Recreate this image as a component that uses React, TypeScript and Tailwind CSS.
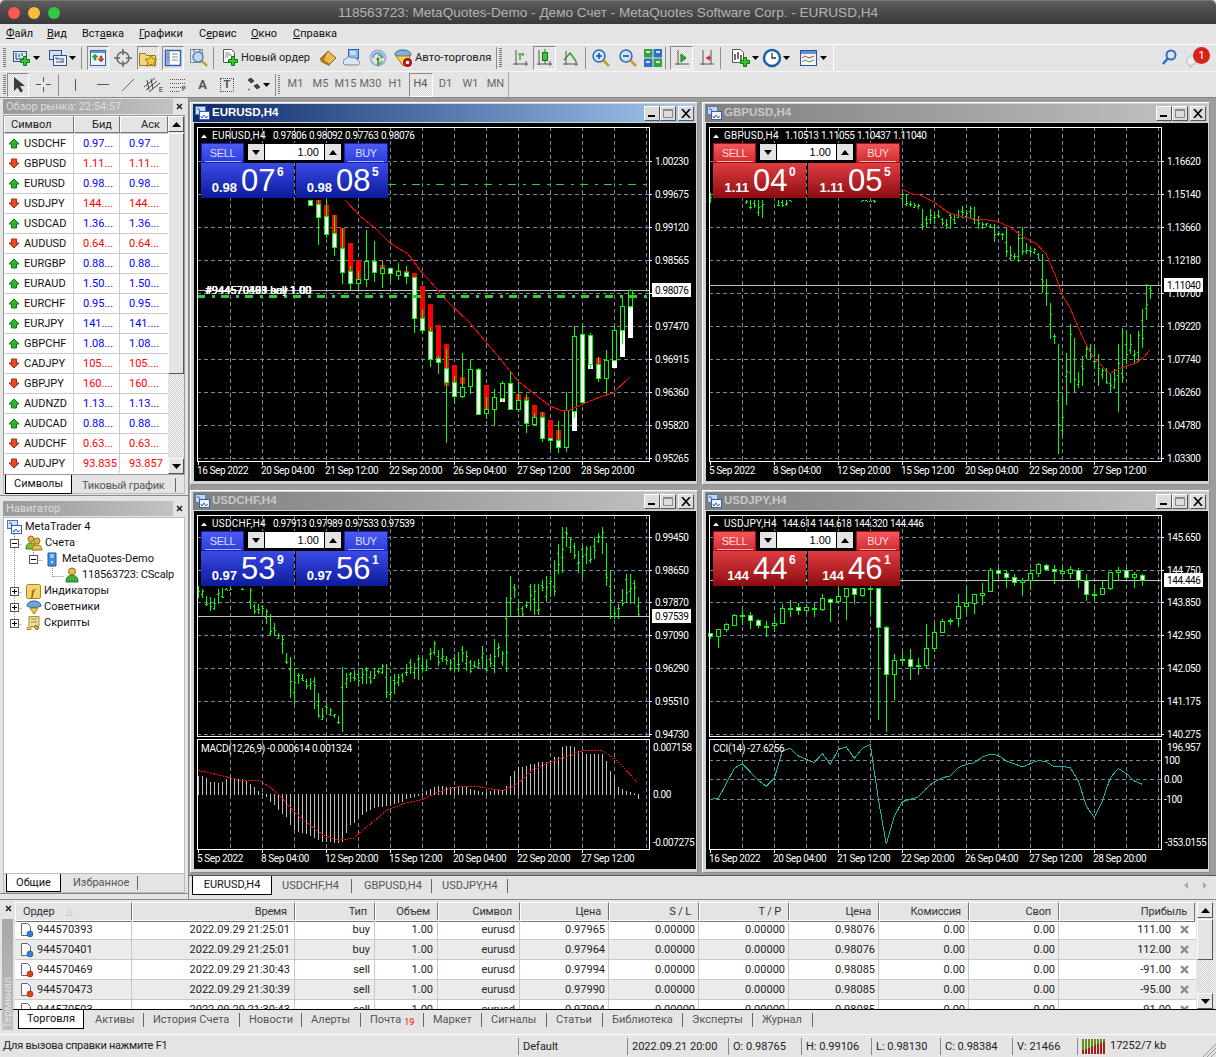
import type { ReactNode } from "react";

type Pt = [number, number];

// ---- chart data, read off the screenshot (page pixels for the candles, 3x crop pixels for the rest)
// [x, wickTop, wickBottom, bodyTop, bodyBottom, bear, redTop, redBottom, whiteBelow]
const eurCandles: number[][] = [
    [310, 199, 204, 199, 204, 1],
    [318, 199, 244, 203, 216, 1, 199, 203],
    [326, 199, 237, 215, 233, 1, 204, 215],
    [334, 214, 255, 232, 246, 1, 214, 232],
    [342, 227, 283, 247, 271, 1, 227, 247],
    [350, 265, 289, 270, 282, 1, 242, 270],
    [358, 270, 289, 278, 282, 0, 259, 278],
    [366, 229, 286, 260, 278, 0],
    [374, 240, 281, 260, 271, 1],
    [382, 260, 287, 267, 272, 0, 264, 267],
    [390, 267, 280, 267, 272, 1],
    [398, 262, 279, 270, 274, 0, 269, 271],
    [406, 265, 283, 271, 275, 1, 270, 271],
    [414, 276, 332, 276, 317, 1, 272, 276],
    [422, 308, 333, 317, 329, 1, 285, 317],
    [430, 326, 366, 330, 358, 1, 303, 330],
    [438, 355, 373, 357, 361, 1, 324, 362],
    [446, 348, 442, 367, 381, 1, 343, 385],
    [454, 375, 403, 381, 395, 1, 364, 381],
    [462, 352, 397, 386, 395, 0, 376, 383],
    [470, 359, 393, 368, 385, 0],
    [478, 367, 414, 368, 413, 1],
    [486, 396, 418, 408, 412, 0, 384, 408],
    [494, 388, 424, 396, 408, 0],
    [502, 380, 401, 382, 397, 0, 0, 0, 401],
    [510, 370, 409, 382, 408, 1],
    [518, 380, 411, 399, 408, 0, 393, 399],
    [526, 393, 432, 399, 422, 1, 396, 399],
    [534, 412, 425, 416, 423, 0, 404, 416],
    [542, 411, 441, 416, 437, 1, 411, 416],
    [550, 437, 448, 437, 439, 1, 419, 437],
    [558, 420, 452, 439, 446, 1, 429, 439],
    [566, 391, 451, 409, 446, 0],
    [574, 325, 417, 335, 410, 0, 0, 0, 430],
    [582, 323, 341, 333, 401, 2],
    [590, 332, 368, 334, 363, 1, 0, 0, 368],
    [598, 356, 381, 363, 377, 1, 357, 363],
    [606, 349, 393, 359, 377, 0],
    [614, 324, 359, 329, 359, 0, 0, 0, 367],
    [622, 296, 343, 305, 329, 0, 0, 0, 356],
    [630, 288, 307, 289, 305, 0, 0, 0, 337],
];
const eurMa: Pt[] = [[345, 199], [360, 215], [375, 227], [390, 242], [408, 253], [423, 273], [430, 280], [447, 300], [470, 322], [485, 340], [502, 360], [518, 380], [537, 395], [550, 405], [560, 409], [570, 409], [583, 403], [600, 396], [613, 392], [630, 376]];

// [cropX, high, low] in crop pixels
const gbpBars: number[][] = [[31, 275, 305], [139, 298, 308], [151, 298, 323], [163, 298, 320], [175, 296, 345], [187, 296, 352], [235, 298, 316], [247, 298, 317], [259, 298, 315], [271, 298, 300], [487, 297, 300], [499, 297, 301], [511, 297, 300], [523, 297, 305], [607, 275, 310], [619, 278, 315], [631, 300, 318], [643, 305, 322], [655, 308, 325], [667, 323, 388], [679, 345, 378], [691, 325, 370], [703, 340, 370], [715, 328, 350], [727, 350, 375], [739, 355, 385], [751, 335, 385], [763, 340, 370], [775, 328, 350], [787, 315, 350], [799, 328, 350], [811, 316, 352], [823, 318, 368], [835, 345, 385], [847, 362, 385], [859, 365, 378], [871, 368, 380], [883, 368, 422], [895, 390, 405], [907, 395, 418], [919, 380, 468], [931, 435, 478], [943, 455, 478], [955, 390, 482], [967, 378, 462], [979, 425, 460], [991, 440, 462], [1003, 440, 460], [1015, 455, 475], [1027, 458, 577], [1039, 535, 615], [1051, 605, 715], [1063, 700, 730], [1075, 728, 1058], [1087, 885, 1002], [1099, 755, 912], [1111, 670, 845], [1123, 712, 872], [1135, 812, 862], [1147, 765, 855], [1159, 735, 775], [1171, 730, 775], [1183, 738, 805], [1195, 760, 855], [1207, 800, 835], [1219, 800, 850], [1231, 815, 872], [1243, 805, 865], [1255, 730, 932], [1267, 680, 845], [1279, 688, 790], [1291, 698, 760], [1303, 748, 785], [1315, 690, 780], [1327, 625, 742], [1339, 550, 658], [1351, 552, 595]];
const gbpMa: Pt[] = [[607, 265], [640, 280], [660, 282], [700, 302], [745, 335], [790, 348], [830, 355], [880, 358], [900, 365], [930, 378], [970, 408], [1010, 428], [1040, 462], [1065, 520], [1085, 580], [1110, 620], [1135, 680], [1165, 745], [1190, 780], [1230, 818], [1265, 800], [1310, 785], [1330, 770], [1350, 747]];

const chfBars: number[][] = [[25, 285, 320], [37, 295, 322], [49, 315, 345], [61, 318, 360], [73, 320, 358], [85, 295, 338], [97, 292, 322], [109, 292, 298], [121, 292, 298], [157, 292, 298], [181, 290, 355], [193, 340, 368], [205, 338, 368], [217, 342, 368], [229, 355, 400], [241, 370, 435], [253, 395, 435], [265, 425, 445], [277, 435, 490], [289, 485, 520], [301, 498, 620], [313, 530, 638], [325, 545, 580], [337, 550, 570], [349, 565, 595], [361, 560, 598], [373, 558, 655], [385, 605, 682], [397, 650, 688], [409, 632, 665], [421, 650, 675], [433, 668, 682], [445, 675, 700], [457, 528, 722], [469, 545, 592], [481, 542, 572], [493, 538, 570], [505, 540, 585], [517, 530, 580], [529, 528, 578], [541, 540, 578], [553, 530, 565], [565, 532, 548], [577, 518, 550], [589, 520, 620], [601, 555, 628], [613, 548, 608], [625, 548, 585], [637, 545, 572], [649, 520, 555], [661, 505, 548], [673, 515, 565], [685, 492, 568], [697, 502, 542], [709, 505, 540], [721, 472, 508], [733, 450, 492], [745, 478, 525], [757, 470, 512], [769, 495, 522], [781, 505, 540], [793, 488, 540], [805, 482, 542], [817, 465, 512], [829, 480, 540], [841, 508, 545], [853, 510, 532], [865, 505, 530], [877, 465, 535], [889, 505, 540], [901, 488, 528], [913, 445, 545], [925, 455, 498], [937, 480, 525], [949, 318, 542], [961, 255, 375], [973, 280, 320], [985, 325, 375], [997, 345, 375], [1009, 330, 352], [1021, 278, 360], [1033, 280, 372], [1045, 280, 372], [1057, 268, 300], [1069, 255, 332], [1081, 255, 318], [1093, 208, 315], [1105, 160, 250], [1117, 108, 245], [1129, 108, 168], [1141, 140, 185], [1153, 155, 205], [1165, 180, 245], [1177, 165, 260], [1189, 165, 218], [1201, 165, 215], [1213, 138, 205], [1225, 125, 155], [1237, 108, 190], [1249, 155, 285], [1261, 240, 385], [1273, 355, 385], [1285, 340, 385], [1297, 295, 345], [1309, 248, 335], [1321, 250, 340], [1333, 268, 340], [1345, 318, 375]];

const macdHist = [55, 55, 48, 36, 36, 32, 35, 45, 48, 48, 46, 45, 42, 30, 20, 10, 3, -5, -22, -30, -45, -58, -65, -90, -105, -110, -115, -118, -122, -128, -135, -140, -142, -142, -145, -145, -140, -115, -90, -85, -70, -60, -50, -45, -40, -35, -35, -32, -30, -28, -25, -20, -12, -8, -5, -2, 3, 8, 15, 20, 25, 25, 20, 20, 22, 22, 22, 20, 15, 12, 8, 5, 5, 8, 12, 12, 12, 25, 55, 70, 80, 82, 85, 90, 90, 95, 95, 95, 100, 110, 110, 140, 143, 145, 140, 130, 125, 120, 120, 120, 120, 120, 100, 68, 50, 22, 15, 8, 5, 3, -12];
const macdSignal: Pt[] = [[25, 838], [100, 855], [150, 868], [205, 868], [240, 888], [270, 915], [310, 960], [350, 995], [400, 1032], [445, 1048], [490, 1042], [540, 1000], [590, 958], [640, 938], [700, 925], [740, 905], [780, 892], [820, 885], [870, 888], [910, 895], [940, 898], [980, 880], [1030, 835], [1085, 812], [1130, 798], [1180, 778], [1235, 778], [1280, 808], [1340, 872]];

// [cropX, wickTop, bodyTop, bodyBottom, wickBottom, bear]
const jpyCandles: number[][] = [[31, 425, 425, 435, 445, 1], [55, 415, 415, 437, 470, 0], [79, 395, 400, 415, 422, 0], [103, 370, 372, 402, 402, 0], [127, 357, 372, 374, 402, 1], [151, 362, 373, 388, 413, 1], [175, 383, 388, 403, 412, 1], [199, 390, 404, 406, 437, 1], [223, 378, 397, 403, 422, 0], [247, 338, 352, 398, 400, 0], [271, 328, 350, 352, 378, 1], [295, 335, 349, 358, 372, 1], [319, 340, 348, 358, 370, 0], [343, 335, 350, 354, 378, 0], [367, 310, 322, 356, 360, 0], [391, 320, 323, 332, 392, 1], [415, 290, 316, 332, 340, 0], [439, 290, 292, 316, 386, 0], [463, 290, 292, 310, 340, 1], [487, 290, 292, 312, 318, 0], [511, 290, 290, 292, 372, 0], [535, 290, 290, 406, 686, 1], [559, 405, 407, 547, 722, 1], [583, 490, 506, 547, 627, 0], [607, 483, 503, 506, 518, 1], [631, 475, 505, 526, 567, 1], [655, 502, 523, 526, 552, 1], [679, 400, 472, 524, 530, 0], [703, 397, 424, 472, 482, 0], [727, 385, 389, 422, 425, 0], [751, 380, 388, 392, 402, 1], [775, 310, 344, 379, 408, 0], [799, 288, 337, 345, 372, 0], [823, 310, 310, 337, 368, 0], [847, 276, 305, 310, 342, 0], [871, 232, 238, 302, 304, 0], [895, 232, 238, 246, 265, 1], [919, 238, 245, 256, 290, 1], [943, 248, 257, 273, 285, 1], [967, 262, 268, 274, 315, 0], [991, 235, 247, 268, 296, 0], [1015, 217, 220, 247, 258, 0], [1039, 220, 222, 233, 238, 1], [1063, 222, 233, 240, 278, 1], [1087, 225, 241, 246, 258, 0], [1111, 225, 235, 247, 264, 0], [1135, 232, 236, 265, 292, 1], [1159, 250, 266, 307, 330, 1], [1183, 280, 308, 311, 330, 1], [1207, 268, 292, 310, 312, 0], [1231, 242, 244, 293, 296, 0], [1255, 228, 238, 243, 270, 0], [1279, 232, 238, 259, 264, 1], [1303, 242, 250, 260, 290, 0], [1327, 250, 252, 267, 285, 1]];
const cciLine: Pt[] = [[31, 925], [55, 922], [103, 832], [127, 818], [175, 868], [199, 886], [223, 862], [247, 780], [271, 772], [295, 795], [343, 815], [367, 788], [391, 820], [415, 775], [439, 768], [463, 802], [487, 772], [511, 760], [535, 925], [559, 1060], [583, 975], [607, 932], [655, 918], [679, 892], [703, 872], [727, 860], [751, 855], [775, 830], [799, 820], [823, 815], [847, 798], [871, 790], [895, 793], [919, 810], [943, 818], [967, 828], [991, 818], [1015, 808], [1039, 812], [1063, 828], [1087, 826], [1111, 830], [1135, 870], [1159, 945], [1183, 980], [1207, 930], [1231, 860], [1255, 832], [1279, 848], [1303, 870], [1327, 880]];

const eurDates = ["16 Sep 2022", "20 Sep 04:00", "21 Sep 12:00", "22 Sep 20:00", "26 Sep 04:00", "27 Sep 12:00", "28 Sep 20:00"];
const sepDates = ["5 Sep 2022", "8 Sep 04:00", "12 Sep 20:00", "15 Sep 12:00", "20 Sep 04:00", "22 Sep 20:00", "27 Sep 12:00"];
const gbpDates = sepDates;

const symbols: [string, string, string, boolean][] = [
    ["USDCHF", "0.97...", "0.97...", true],
    ["GBPUSD", "1.11...", "1.11...", false],
    ["EURUSD", "0.98...", "0.98...", true],
    ["USDJPY", "144....", "144....", false],
    ["USDCAD", "1.36...", "1.36...", true],
    ["AUDUSD", "0.64...", "0.64...", false],
    ["EURGBP", "0.88...", "0.88...", true],
    ["EURAUD", "1.50...", "1.50...", true],
    ["EURCHF", "0.95...", "0.95...", true],
    ["EURJPY", "141....", "141....", true],
    ["GBPCHF", "1.08...", "1.08...", true],
    ["CADJPY", "105....", "105....", false],
    ["GBPJPY", "160....", "160....", false],
    ["AUDNZD", "1.13...", "1.13...", true],
    ["AUDCAD", "0.88...", "0.88...", true],
    ["AUDCHF", "0.63...", "0.63...", false],
    ["AUDJPY", "93.835", "93.857", false],
];

const orders = [
    ["944570393", "2022.09.29 21:25:01", "buy", "0.97965", "0.98076", "111.00"],
    ["944570401", "2022.09.29 21:25:01", "buy", "0.97964", "0.98076", "112.00"],
    ["944570469", "2022.09.29 21:30:43", "sell", "0.97994", "0.98085", "-91.00"],
    ["944570473", "2022.09.29 21:30:39", "sell", "0.97990", "0.98085", "-95.00"],
    ["944570503", "2022.09.29 21:30:43", "sell", "0.97994", "0.98085", "-91.00"],
];

// ---- chart pieces
const line = (pts: Pt[]) => pts.map((p) => p.join(",")).join(" ");
const GRID = "#778899";
const GREEN = "#00ff00";

function Bars({ data, cx, cy }: { data: number[][]; cx: number; cy: number }) {
    return (
        <g shapeRendering="crispEdges">
            {data.map(([zx, hi, lo], i) => {
                const x = Math.round(cx + zx / 3);
                const top = cy + hi / 3;
                const bottom = cy + lo / 3;
                const o = top + (((i * 37) % 80) / 100 + 0.1) * (bottom - top);
                const c = top + (((i * 61 + 30) % 80) / 100 + 0.1) * (bottom - top);
                return (
                    <g key={i} fill={GREEN}>
                        <rect x={x} y={top} width={1} height={bottom - top} />
                        <rect x={x - 1} y={o} width={1} height={1} />
                        <rect x={x + 1} y={c} width={1} height={1} />
                    </g>
                );
            })}
        </g>
    );
}

function Candle({ x, wt, wb, bt, bb, bear }: { x: number; wt: number; wb: number; bt: number; bb: number; bear: boolean }) {
    return (
        <g>
            <rect x={x} y={wt} width={1} height={wb - wt} fill={GREEN} />
            <rect x={x - 2 + 0.5} y={Math.round(bt) + 0.5} width={4} height={Math.max(1, Math.round(bb - bt))} fill={bear ? "#fff" : "#000"} stroke={GREEN} />
        </g>
    );
}

function EurCandles() {
    return (
        <g shapeRendering="crispEdges">
            {eurCandles.map(([x, wt, wb, bt, bb, kind, rt, rb, wh], i) => (
                <g key={i}>
                    {rt ? <rect x={x - 2} y={rt} width={5} height={rb - rt} fill="#ff0000" /> : null}
                    {wh ? <rect x={x - 2} y={bb} width={5} height={wh - bb} fill="#fff" /> : null}
                    <Candle x={x} wt={wt} wb={wb} bt={bt} bb={bb} bear={kind > 0} />
                </g>
            ))}
        </g>
    );
}

function JpyCandles() {
    return (
        <g shapeRendering="crispEdges">
            {jpyCandles.map(([zx, wt, bt, bb, wb, bear], i) => (
                <Candle key={i} x={Math.round(700 + zx / 3)} wt={490 + wt / 3} wb={490 + wb / 3} bt={490 + bt / 3} bb={490 + bb / 3} bear={bear > 0} />
            ))}
        </g>
    );
}

function MacdPane() {
    return (
        <g>
            <g shapeRendering="crispEdges" fill="#c0c0c0">
                {macdHist.map((v, i) => {
                    const x = Math.round(190 + (25 + i * 12) / 3);
                    const h = Math.abs(v) / 3;
                    return <rect key={i} x={x} y={v > 0 ? 793 - h : 793} width={1} height={h + 1} />;
                })}
            </g>
            <polyline points={line(macdSignal.map(([x, y]): Pt => [190 + x / 3, 490 + y / 3]))} fill="none" stroke="#ff0000" strokeWidth={1} strokeDasharray="2 1" shapeRendering="crispEdges" />
            <ChartText x={201} y={751} spacing={-0.25}>MACD(12,26,9) -0.000614 0.001324</ChartText>
        </g>
    );
}

function ChartText({ x, y, fill = "#fff", spacing = -0.4, children }: { x: number; y: number; fill?: string; spacing?: number; children: ReactNode }) {
    return (
        <text x={x} y={y} fill={fill} fontSize={10} letterSpacing={spacing}>
            {children}
        </text>
    );
}

type ChartProps = {
    ox: number;
    oy: number;
    frameTop: number;
    frameBottom: number;
    sub?: { grid: number[]; labels: [string, number, number?][] };
    gridY: number[];
    labels: [string, number][];
    price: [string, number, number];
    dates: string[];
    legend: [string, string, number];
    children: ReactNode;
};

function Chart({ ox, oy, frameTop, frameBottom, sub, gridY, labels, price, dates, legend, children }: ChartProps) {
    const fx = ox + 3;
    const right = fx + 452;
    const bottom = sub ? 848 : frameBottom;
    const vx = Array.from({ length: 14 }, (_, i) => fx + 33 + i * 32);
    return (
        <svg width={502} height={358} viewBox={`${ox} ${oy} 502 358`} className="block bg-black">
            {gridY.map((y) => (
                <line key={y} x1={fx} x2={right} y1={y + 0.5} y2={y + 0.5} stroke={GRID} strokeDasharray="4 3" shapeRendering="crispEdges" />
            ))}
            {sub?.grid.map((y) => (
                <line key={y} x1={fx} x2={right} y1={y + 0.5} y2={y + 0.5} stroke={GRID} strokeDasharray="4 3" shapeRendering="crispEdges" />
            ))}
            {vx.map((x) => (
                <g key={x}>
                    <line x1={x + 0.5} x2={x + 0.5} y1={frameTop} y2={frameBottom} stroke={GRID} strokeDasharray="4 3" shapeRendering="crispEdges" />
                    {sub ? <line x1={x + 0.5} x2={x + 0.5} y1={738} y2={848} stroke={GRID} strokeDasharray="4 3" shapeRendering="crispEdges" /> : null}
                </g>
            ))}
            <line x1={fx} x2={right} y1={price[2] + 0.5} y2={price[2] + 0.5} stroke="#c0c0c0" shapeRendering="crispEdges" />
            {children}
            <rect x={fx + 0.5} y={frameTop + 0.5} width={452} height={frameBottom - frameTop} fill="none" stroke="#fff" shapeRendering="crispEdges" />
            {sub ? <rect x={fx + 0.5} y={738.5} width={452} height={110} fill="none" stroke="#fff" shapeRendering="crispEdges" /> : null}
            {gridY.map((y) => (
                <line key={y} x1={right} x2={right + 3} y1={y + 0.5} y2={y + 0.5} stroke="#fff" shapeRendering="crispEdges" />
            ))}
            {labels.map(([t, y]) => (
                <ChartText key={t} x={fx + 458} y={y + 3.5}>{t}</ChartText>
            ))}
            {sub?.labels.map(([t, y, dx]) => (
                <ChartText key={t} x={fx + (dx ?? 456)} y={y + 3.5}>{t}</ChartText>
            ))}
            <rect x={fx + 455} y={price[1] - 7} width={39} height={14} fill="#fff" />
            <ChartText x={fx + 458} y={price[1] + 3.5} fill="#000">{price[0]}</ChartText>
            {dates.map((d, i) => (
                <g key={d}>
                    <line x1={fx + 1.5 + i * 64} x2={fx + 1.5 + i * 64} y1={bottom} y2={bottom + 4} stroke="#fff" shapeRendering="crispEdges" />
                    <ChartText x={fx + i * 64} y={bottom + 12.5}>{d}</ChartText>
                </g>
            ))}
            <path d={`M${fx + 4} ${frameTop + 11}l3 -3.5 3 3.5z`} fill="#fff" />
            <ChartText x={fx + 15} y={frameTop + 11.5} spacing={0.25}>{legend[0]}</ChartText>
            {legend[1].split(" ").map((v, i) => (
                <ChartText key={i} x={fx + legend[2] + i * 36} y={frameTop + 11.5}>{v}</ChartText>
            ))}
        </svg>
    );
}

// ---- one-click trade panel over the chart
function TradePanel({ red, sell, buy }: { red?: boolean; sell: [string, string, string]; buy: [string, string, string] }) {
    const head = red ? "border-[#a50f14] bg-gradient-to-b from-[#f4555b] to-[#cf2c32] text-[#ffd9d9]" : "border-[#1522b5] bg-gradient-to-b from-[#4d5bf3] to-[#2e3dda] text-[#d6deff]";
    const body = red ? "bg-gradient-to-b from-[#e03c42] to-[#8e0a0e]" : "bg-gradient-to-b from-[#3b49e6] to-[#0c1b9c]";
    const rule = red ? "border-[#ffb8b8]" : "border-[#aab6ff]";
    const price = (p: [string, string, string], cls: string) => (
        <div className={`h-[35px] flex items-start text-white ${body} ${cls}`}>
            <span className="mt-[17px] text-[13px] leading-[15px] font-bold w-[36px] text-right shrink-0">{p[0]}</span>
            <span className="ml-[4px] mt-[1px] text-[31px] leading-[34px] w-[35px] shrink-0">{p[1]}</span>
            <span className="ml-[1px] mt-[3px] text-[12px] leading-[13px] font-bold">{p[2]}</span>
        </div>
    );
    return (
        <div className="absolute top-[20px] left-[7px] w-[187px] [font-family:'Liberation_Sans',sans-serif]">
            <div className="flex h-[20px]">
                <div className={`w-[43px] border flex justify-center ${head}`}>
                    <span className={`w-[36px] text-center text-[11px] leading-[18px] border-b tracking-[-0.4px] ${rule}`}>SELL</span>
                </div>
                <div className="w-[100px] bg-black flex pl-[4px] pt-[1px] gap-px h-[20px]">
                    <div className="w-[16px] h-[16px] bg-[#e4e4e4] flex items-center justify-center">
                        <svg width="8" height="5"><path d="M0 0h8l-4 5z" fill="#000" /></svg>
                    </div>
                    <div className="w-[59px] h-[16px] bg-white text-black text-[11px] leading-[17px] text-right pr-[5px]">1.00</div>
                    <div className="w-[16px] h-[16px] bg-[#e4e4e4] flex items-center justify-center">
                        <svg width="8" height="5"><path d="M0 5h8l-4-5z" fill="#000" /></svg>
                    </div>
                </div>
                <div className={`w-[44px] border flex justify-center ${head}`}>
                    <span className={`w-[36px] text-center text-[11px] leading-[18px] border-b tracking-[-0.4px] ${rule}`}>BUY</span>
                </div>
            </div>
            <div className="flex gap-[2px]">
                {price(sell, "w-[93px]")}
                {price(buy, "w-[92px]")}
            </div>
        </div>
    );
}

function WinButton({ kind }: { kind: "min" | "max" | "close" }) {
    return (
        <div className="w-[16px] h-[15px] bg-[#dcdcdc] border border-t-white border-l-white border-r-[#555] border-b-[#555] flex items-center justify-center">
            {kind === "min" && <div className="w-[7px] h-[2px] bg-black mt-[6px] -ml-[2px]" />}
            {kind === "max" && <div className="w-[10px] h-[9px] border border-[#8a8a8a] border-t-2" />}
            {kind === "close" && (
                <svg width="10" height="9">
                    <path d="M1 0l8 9M9 0l-8 9" stroke="#000" strokeWidth="1.6" />
                </svg>
            )}
        </div>
    );
}

function ChartGlyph({ dim }: { dim?: boolean }) {
    return (
        <svg width="15" height="14" className={dim ? "opacity-90" : ""}>
            <rect x="0.5" y="0.5" width="10" height="8" fill="#cfe0f8" stroke="#4a78c0" />
            <rect x="4.5" y="5.5" width="10" height="8" fill="#fff" stroke="#2e5fb5" />
            <path d="M2 3h2l1 2M6 10l1 2 2-3 2 3 2-2" fill="none" stroke="#2e5fb5" />
        </svg>
    );
}

function ChartWindow({ title, active, children }: { title: string; active?: boolean; children: ReactNode }) {
    return (
        <div className="bg-[#d4d4d4] border border-[#8c8c8c] border-t-white border-l-white h-[383px] w-[508px] px-[2px] pt-px">
            <div className={`h-[18px] flex items-center pl-[2px] pr-px ${active ? "bg-gradient-to-r from-[#0f2a6b] to-[#a6caf0]" : "bg-gradient-to-r from-[#808080] to-[#c4c4c4]"}`}>
                <ChartGlyph dim={!active} />
                <span className={`ml-[2px] text-[11.5px] font-bold [font-family:'Liberation_Sans',sans-serif] ${active ? "text-white" : "text-[#c8c8c8]"}`}>{title}</span>
                <div className="ml-auto flex">
                    <WinButton kind="min" />
                    <WinButton kind="max" />
                    <div className="w-[2px]" />
                    <WinButton kind="close" />
                </div>
            </div>
            <div className="relative mt-px ml-px bg-black h-[358px] w-[502px]">{children}</div>
        </div>
    );
}

// ---- toolbar icons
const Cross = ({ x, y }: { x: number; y: number }) => (
    <path d={`M${x + 3.5} ${y + 0.5}h3v3h3v3h-3v3h-3v-3h-3v-3h3z`} fill="#37c437" stroke="#0b7a0b" />
);

const NewChartIcon = () => (
    <svg width="20" height="20">
        <rect x="1.5" y="3.5" width="13" height="10" fill="#dbe6f6" stroke="#2d5596" />
        <path d="M4 5v6h8M7 6v3M10 5v3" stroke="#1f3f7c" fill="none" />
        <Cross x={8} y={8} />
    </svg>
);
const ProfileIcon = () => (
    <svg width="20" height="20">
        <rect x="1.5" y="2.5" width="12" height="9" fill="#cfe0f6" stroke="#2d5596" />
        <rect x="5.5" y="7.5" width="13" height="10" fill="#e9f1fb" stroke="#2d5596" />
        <path d="M8 11h8M8 14h8" stroke="#2d5596" />
        <path d="M7 10h3M13 13h3" stroke="#d03030" />
    </svg>
);
const MarketIcon = () => (
    <svg width="18" height="18">
        <rect x="1.5" y="1.5" width="15" height="15" fill="#eaf2fb" stroke="#3568b0" />
        <rect x="2" y="2" width="14" height="2" fill="#5f94d6" />
        <path d="M6 5l3 3h-2v3h-2v-3h-2z" fill="#2fb12f" stroke="#0a7a0a" strokeWidth=".5" />
        <path d="M12 13l-3-3h2v-3h2v3h2z" fill="#e04020" stroke="#982010" strokeWidth=".5" />
    </svg>
);
const DataWindowIcon = () => (
    <svg width="20" height="20" fill="none" stroke="#666">
        <circle cx="10" cy="10" r="6" strokeWidth="1.5" />
        <path d="M10 1v6M10 13v6M1 10h6M13 10h6" strokeWidth="1.5" />
    </svg>
);
const FolderStarIcon = () => (
    <svg width="20" height="20">
        <path d="M1.5 5.5h6l1 2h9v10h-16z" fill="#f4d678" stroke="#9a7a20" />
        <path d="M13 7l1.8 3.8 4.2.5-3 2.8.8 4.2-3.8-2-3.8 2 .8-4.2-3-2.8 4.2-.5z" fill="#f2c93c" stroke="#a37f14" />
    </svg>
);
const NavigatorIcon = () => (
    <svg width="18" height="18">
        <rect x="1.5" y="1.5" width="15" height="15" fill="#fff" stroke="#2f64b0" strokeWidth="1.5" />
        <rect x="2" y="2" width="4" height="14" fill="#8ab4e8" />
        <path d="M8 5h6M8 8h6M8 11h6" stroke="#888" />
        <path d="M3 5h2M3 8h2M3 11h2" stroke="#d43" />
    </svg>
);
const TesterIcon = () => (
    <svg width="20" height="20">
        <rect x="1.5" y="1.5" width="12" height="13" fill="#dfe8f2" stroke="#7a8aa0" />
        <circle cx="9" cy="9" r="5" fill="#bcd8f4" stroke="#5a7fa8" strokeWidth="1.4" />
        <path d="M13 13l5 5" stroke="#c49a2a" strokeWidth="2.4" />
        <path d="M5 1v3M11 1v3" stroke="#555" />
    </svg>
);
const NewOrderIcon = () => (
    <svg width="20" height="20">
        <path d="M2.5 1.5h8l3 3v10h-11z" fill="#fff" stroke="#555" />
        <path d="M4 5h5M4 7h7M4 9h3" stroke="#888" />
        <Cross x={7} y={8} />
    </svg>
);
const EditorIcon = () => (
    <svg width="20" height="20">
        <path d="M2 11l8-8 8 7-7 7z" fill="#e8bb58" stroke="#8a6418" />
        <path d="M10 3l-8 8 1 3 8 4 1-2-6-4z" fill="#a97a24" />
    </svg>
);
const CloudIcon = () => (
    <svg width="20" height="20">
        <rect x="5.5" y="1.5" width="10" height="9" fill="#8ab8ee" stroke="#2a62b5" />
        <path d="M7 4h6M7 6h6" stroke="#fff" />
        <path d="M3 17a3 3 0 010-6c1-2 4-3 6-1 2-1 5 0 5 2 3 0 4 5 0 5z" fill="#dbe6f2" stroke="#6f88a8" />
    </svg>
);
const RadioIcon = () => (
    <svg width="20" height="20" fill="none">
        <circle cx="10" cy="10" r="7.5" stroke="#9ab4d8" strokeWidth="2" />
        <path d="M5 10a5 5 0 0110 0" stroke="#4a8ed0" strokeWidth="1.5" />
        <path d="M10 7a3.5 3.5 0 013.5 3.5M14 13a5 5 0 01-3 3" stroke="#4bb04b" strokeWidth="1.5" />
        <circle cx="10" cy="11" r="1.5" fill="#2f8a2f" />
        <path d="M10 11v7" stroke="#2f8a2f" strokeWidth="1.5" />
    </svg>
);
const AutoIcon = () => (
    <svg width="20" height="20">
        <path d="M2 7c0-3 3-5 8-5s8 2 8 5c-3 2-13 2-16 0z" fill="#7fb2dc" stroke="#356a9c" />
        <path d="M3 8l7 10 6-6 1-4z" fill="#f1cf62" stroke="#a37f14" />
        <circle cx="14.5" cy="14.5" r="4" fill="#d81818" stroke="#700" />
        <rect x="13" y="13" width="3" height="3" fill="#fff" />
    </svg>
);
const BarModeIcon = () => (
    <svg width="18" height="20" fill="none">
        <path d="M4 2v15M1 16h15M14 13v5" stroke="#555" />
        <path d="M8 12V6h-2M8 6h3M11 5v3" stroke="#1f9a1f" strokeWidth="1.2" />
    </svg>
);
const CandleModeIcon = () => (
    <svg width="18" height="20" fill="none">
        <path d="M3 2v15M1 16h15M14 13v5" stroke="#555" />
        <path d="M9 1v15" stroke="#137a13" />
        <rect x="6.5" y="4.5" width="5" height="8" fill="#3cc63c" stroke="#137a13" />
    </svg>
);
const LineModeIcon = () => (
    <svg width="18" height="20" fill="none">
        <path d="M4 3v14M1 16h15M14 13v5" stroke="#555" />
        <path d="M2 12l6-7 6 8" stroke="#1f9a1f" strokeWidth="1.3" />
    </svg>
);
const ZoomIcon = ({ plus }: { plus?: boolean }) => (
    <svg width="20" height="20" fill="none">
        <circle cx="8" cy="8" r="6" fill="#cfe4fa" stroke="#2d69b0" strokeWidth="1.5" />
        <path d={plus ? "M5 8h6M8 5v6" : "M5 8h6"} stroke="#1a53a0" strokeWidth="1.6" />
        <path d="M12.5 12.5l5.5 5.5" stroke="#c99a2c" strokeWidth="2.6" />
    </svg>
);
const TileIcon = () => (
    <svg width="20" height="20">
        <rect x="1" y="1" width="8.5" height="8.5" fill="#33a044" />
        <rect x="10.5" y="1" width="8.5" height="8.5" fill="#2c6fc4" />
        <rect x="1" y="10.5" width="8.5" height="8.5" fill="#2c6fc4" />
        <rect x="10.5" y="10.5" width="8.5" height="8.5" fill="#33a044" />
        <path d="M3 4h4M13 4h4M3 14h4M13 14h4" stroke="#fff" strokeWidth="1.4" />
    </svg>
);
const ScrollIcon = () => (
    <svg width="18" height="20" fill="none">
        <path d="M5 2v15M2 16h14" stroke="#555" />
        <path d="M8 6l5 4-5 4z" fill="#2fb12f" stroke="#117a11" />
    </svg>
);
const ShiftIcon = () => (
    <svg width="18" height="20" fill="none">
        <path d="M5 2v15M2 16h14M13 2v14" stroke="#555" />
        <path d="M13 10h-5" stroke="#c22" strokeWidth="1.4" />
        <path d="M12 7l-4 3 4 3z" fill="#d33" />
    </svg>
);
const IndicatorIcon = () => (
    <svg width="20" height="20">
        <path d="M1.5 1.5h8l3 3v10h-11z" fill="#fff" stroke="#555" />
        <path d="M4 12V6M7 11V4M10 12V7" stroke="#333" strokeWidth="1.4" />
        <Cross x={9} y={9} />
    </svg>
);
const ClockIcon = () => (
    <svg width="20" height="20" fill="none">
        <circle cx="10" cy="10" r="8" fill="#fff" stroke="#1a5ea8" strokeWidth="2.4" />
        <path d="M10 5v5h4" stroke="#333" strokeWidth="1.3" />
    </svg>
);
const TemplateIcon = () => (
    <svg width="20" height="20">
        <rect x="1.5" y="2.5" width="16" height="15" fill="#f2f6fb" stroke="#2d5596" />
        <rect x="2" y="3" width="15" height="3" fill="#5f94d6" />
        <path d="M3 10l3-2 4 2 5-2" stroke="#c33" fill="none" />
        <path d="M3 14l3-2 4 2 5-2" stroke="#3a3" fill="none" />
    </svg>
);
const DropArrow = () => (
    <svg width="7" height="4" className="shrink-0">
        <path d="M0 0h7l-3.5 4z" fill="#000" />
    </svg>
);

function Grip() {
    return <div className="ml-[2px] mr-[1px] w-[3px] h-[20px] bg-[repeating-linear-gradient(to_bottom,#7a7a7a_0_1px,transparent_1px_2px)]" />;
}
function Sep({ className = "" }: { className?: string }) {
    return <div className={`w-px h-[22px] bg-[#8e8e8e] shrink-0 ${className}`} />;
}
function Btn({ className, pressed, children }: { className: string; pressed?: boolean; children: ReactNode }) {
    return (
        <div
            className={`h-[24px] shrink-0 flex items-center justify-center gap-[1px] ${className} ${
                pressed ? "border border-t-[#8a8a8a] border-l-[#8a8a8a] border-r-white border-b-white bg-[repeating-conic-gradient(#d8d8d8_0_25%,#f2f2f2_0_50%)] bg-[length:2px_2px]" : ""
            }`}
        >
            {children}
        </div>
    );
}

const tfs = [
    ["M1", false],
    ["M5", false],
    ["M15", false],
    ["M30", false],
    ["H1", false],
    ["H4", true],
    ["D1", false],
    ["W1", false],
    ["MN", false],
] as const;

function ToolbarTop() {
    return (
        <div className="h-[28px] flex bg-[#e4e4e4] border-t border-white border-b border-b-[#f6f6f6]">
            <div className="w-[834px] flex items-center border-r border-white">
                <div className="ml-[1px]"><Grip /></div>
                <Btn className="w-[35px] pl-[5px] !justify-start"><NewChartIcon /><DropArrow /></Btn>
                <Btn className="w-[36px] pl-[6px] !justify-start"><ProfileIcon /><DropArrow /></Btn>
                <Sep className="ml-[3px]" />
                <Btn className="w-[22px] ml-[5px]" pressed><MarketIcon /></Btn>
                <Btn className="w-[28px]"><DataWindowIcon /></Btn>
                <Btn className="w-[22px]" pressed><FolderStarIcon /></Btn>
                <Btn className="w-[22px] ml-[3px]" pressed><NavigatorIcon /></Btn>
                <Btn className="w-[29px]"><TesterIcon /></Btn>
                <Sep />
                <Btn className="w-[101px] pl-[7px] !justify-start"><NewOrderIcon /><span className="text-[11px] -ml-[1px] text-[#222]">Новый ордер</span></Btn>
                <Btn className="w-[25px]"><EditorIcon /></Btn>
                <Btn className="w-[25px]"><CloudIcon /></Btn>
                <Btn className="w-[25px]"><RadioIcon /></Btn>
                <Btn className="w-[106px] pl-[3px] !justify-start"><AutoIcon /><span className="ml-[1px] text-[11.25px] text-[#222]">Авто-торговля</span></Btn>
                <Sep />
                <Grip />
                <Btn className="w-[25px] ml-[5px]"><BarModeIcon /></Btn>
                <Btn className="w-[23px]" pressed><CandleModeIcon /></Btn>
                <Btn className="w-[29px]"><LineModeIcon /></Btn>
                <Sep />
                <Btn className="w-[28px] ml-[1px]"><ZoomIcon plus /></Btn>
                <Btn className="w-[25px]"><ZoomIcon /></Btn>
                <Btn className="w-[25px]"><TileIcon /></Btn>
                <Sep />
                <Btn className="w-[23px] ml-[4px]" pressed><ScrollIcon /></Btn>
                <Btn className="w-[27px]"><ShiftIcon /></Btn>
                <Sep />
                <Btn className="w-[39px] pl-[10px] !justify-start"><IndicatorIcon /><DropArrow /></Btn>
                <Btn className="w-[36px] pl-[2px] !justify-start"><ClockIcon /><DropArrow /></Btn>
                <Btn className="w-[36px] pl-[3px] !justify-start"><TemplateIcon /><DropArrow /></Btn>
            </div>
            <div className="flex-1 flex items-center justify-end pr-[6px] relative">
                <svg width="16" height="18" className="mr-[33px]" fill="none">
                    <circle cx="10" cy="6" r="4.5" stroke="#2f6fc8" strokeWidth="2" />
                    <path d="M7 9l-5 6" stroke="#2f6fc8" strokeWidth="2.6" />
                </svg>
                <svg width="14" height="14" className="absolute right-[17px] top-[9px]" fill="none">
                    <path d="M2 9a5 5 0 119 0l-4 2-2 3v-3c-2 0-3-1-3-2z" stroke="#b9b9b9" fill="#ececec" />
                </svg>
                <div className="absolute right-[6px] top-[2px] w-[17px] h-[17px] rounded-full bg-[#d8231d] text-white text-[11px] leading-[17px] text-center">1</div>
            </div>
        </div>
    );
}

function ToolbarBottom() {
    return (
        <div className="h-[26px] flex bg-[#e4e4e4] border-b border-[#888]">
            <div className="w-[509px] flex items-center border-r border-[#aaa]">
                <div className="ml-[1px]"><Grip /></div>
                <Btn className="w-[22px]" pressed>
                    <svg width="13" height="17"><path d="M2 1v14l3.5-3.5 3 5 2.5-1.5-3-5h5z" fill="#3a3a3a" /></svg>
                </Btn>
                <Btn className="w-[29px]">
                    <svg width="17" height="17" stroke="#555"><path d="M8.5 1v5M8.5 11v5M1 8.5h5M11 8.5h5" /></svg>
                </Btn>
                <Sep />
                <Btn className="w-[29px] ml-[2px]"><svg width="3" height="16"><path d="M1.5 2v12" stroke="#555" /></svg></Btn>
                <Btn className="w-[26px]"><svg width="14" height="3"><path d="M1 1.5h12" stroke="#555" /></svg></Btn>
                <Btn className="w-[24px]"><svg width="16" height="16"><path d="M2 14L14 2" stroke="#666" /></svg></Btn>
                <Btn className="w-[25px]">
                    <svg width="20" height="18" fill="none" stroke="#444"><path d="M2 11L13 2M4 14L15 5M7 16L18 7M5 4l2 10M9 3l2 10" /></svg>
                    <span className="text-[8px] -ml-[4px] mt-[10px] text-[#333]">E</span>
                </Btn>
                <Btn className="w-[25px]">
                    <svg width="18" height="16" stroke="#555" strokeDasharray="1 1"><path d="M1 2.5h15M1 6.5h15M1 10.5h15M1 14.5h10" /></svg>
                    <span className="text-[8px] -ml-[6px] mt-[8px] text-[#333]">F</span>
                </Btn>
                <Btn className="w-[25px]"><span className="text-[13px] font-bold text-[#555]">A</span></Btn>
                <Btn className="w-[24px]">
                    <div className="w-[14px] h-[14px] border border-dotted border-[#555] text-[11px] leading-[12px] font-bold text-center text-[#555]">T</div>
                </Btn>
                <Btn className="w-[34px] pl-[3px]">
                    <svg width="16" height="16"><path d="M2 3l3-2 3 3-3 2zM8 9l3-2 3 3-3 2zM2 13l2-1" fill="#444" stroke="#444" /></svg>
                    <DropArrow />
                </Btn>
                <Sep className="ml-[2px]" />
                <Grip />
                <div className="w-[2px]" />
                {tfs.map(([t, on]) => (
                    <Btn key={t} className={on ? "w-[24px] mx-[0.5px] text-[11px] text-[#555]" : "w-[25px] text-[11px] text-[#666]"} pressed={on}>
                        {t}
                    </Btn>
                ))}
            </div>
        </div>
    );
}

function CloseX() {
    return (
        <svg width="7" height="7" className="shrink-0">
            <path d="M1 1l5 5M6 1l-5 5" stroke="#222" strokeWidth="1.5" />
        </svg>
    );
}
function PanelHead({ title }: { title: string }) {
    return (
        <div className="h-[15px] flex items-center">
            <div className="w-[170px] h-[15px] bg-gradient-to-r from-[#9a9a9a] to-[#c2c2c2] text-[#dedede] text-[11px] leading-[15px] pl-[3px] whitespace-nowrap">{title}</div>
            <div className="flex-1 flex justify-center"><CloseX /></div>
        </div>
    );
}

const UpDown = ({ up }: { up: boolean }) => (
    <svg width="12" height="11" className="shrink-0">
        {up ? <path d="M6 1l5 5H8.500v4h-5V6H1z" fill="#2db52d" stroke="#0e7a0e" /> : <path d="M6 10l5-5H8.500V1h-5v4H1z" fill="#ee4a22" stroke="#a02a10" />}
    </svg>
);

function ScrollBtn({ up }: { up?: boolean }) {
    return (
        <div className="h-[16px] w-[16px] bg-[#e4e4e4] border border-t-white border-l-white border-r-[#555] border-b-[#555] flex items-center justify-center shrink-0">
            <svg width="9" height="5"><path d={up ? "M0 5h9L4.500 0z" : "M0 0h9L4.500 5z"} fill="#000" /></svg>
        </div>
    );
}

const hatch = "bg-[repeating-conic-gradient(#cfcfcf_0_25%,#f4f4f4_0_50%)] bg-[length:2px_2px]";

function MarketWatch() {
    return (
        <div className="h-[398px] pt-px pl-[3px] pr-[3px] border-b border-[#888]">
            <PanelHead title="Обзор рынка: 22:54:57" />
            <div className="flex bg-white border border-[#9a9a9a] mt-px h-[360px] overflow-hidden">
                <div className="w-[164px]">
                    <div className="flex h-[17px] bg-[#e4e4e4] text-[#222] text-[11px] leading-[15px]">
                        <div className="w-[70px] pl-[6px] border border-t-white border-l-white border-r-[#777] border-b-[#777]">Символ</div>
                        <div className="w-[46px] pr-[7px] text-right border border-t-white border-l-white border-r-[#777] border-b-[#777]">Бид</div>
                        <div className="w-[48px] pr-[7px] text-right border border-t-white border-l-white border-r-[#777] border-b-[#777]">Аск</div>
                    </div>
                    {symbols.map(([s, b, a, up]) => (
                        <div key={s} className="flex h-[20px] border-t border-[#cacaca] text-[11px] leading-[19px] first:border-t-0 first:mt-px">
                            <div className="w-[70px] flex items-center gap-[4px] pl-[4px] text-[#111] border-r border-[#cacaca]">
                                <UpDown up={up} />
                                {s}
                            </div>
                            <div className={`w-[46px] pl-[9px] border-r border-[#cacaca] ${up ? "text-[#0000ff]" : "text-[#ff0000]"}`}>{b}</div>
                            <div className={`w-[47px] pl-[9px] ${up ? "text-[#0000ff]" : "text-[#ff0000]"}`}>{a}</div>
                        </div>
                    ))}
                </div>
                <div className={`w-[16px] flex flex-col ${hatch}`}>
                    <ScrollBtn up />
                    <div className="h-[241px] mt-px bg-[#e4e4e4] border border-t-white border-l-white border-r-[#555] border-b-[#555]" />
                    <div className="flex-1" />
                    <ScrollBtn />
                </div>
            </div>
            <div className="h-[19px] flex bg-[#e4e4e4] border border-[#bbb] border-t-0 text-[11px]">
                <div className="ml-px w-[67px] h-[19px] bg-white border-l border-r border-b border-black text-center text-[#111] leading-[18px]">Символы</div>
                <div className="ml-[10px] w-[94px] text-[#555] leading-[15px] tracking-[-0.2px] border-r border-[#666] h-[14px] mt-[3px]">Тиковый график</div>
            </div>
        </div>
    );
}

function Box({ open }: { open?: boolean }) {
    return (
        <div className="w-[9px] h-[9px] bg-white border border-[#555] flex items-center justify-center shrink-0 relative">
            <div className="w-[5px] h-px bg-black" />
            {!open && <div className="absolute w-px h-[5px] bg-black" />}
        </div>
    );
}

const PeopleIcon = () => (
    <svg width="18" height="16">
        <circle cx="6" cy="4" r="3" fill="#e4b53a" stroke="#96701a" />
        <path d="M1 14c0-5 2-6 5-6s5 1 5 6z" fill="#8cb83e" stroke="#4f7a18" />
        <circle cx="12" cy="6" r="3" fill="#e4b53a" stroke="#96701a" />
        <path d="M7 15c0-4 2-5 5-5s5 1 5 5z" fill="#e6c04a" stroke="#96701a" />
    </svg>
);
const ServerIcon = () => (
    <svg width="12" height="16">
        <path d="M2 2h8v13H2z" fill="#3f8fdc" stroke="#1b5a9c" />
        <path d="M4 4h4M4 6h4" stroke="#fff" />
        <circle cx="6" cy="11" r="1" fill="#fff" />
    </svg>
);
const UserIcon = () => (
    <svg width="14" height="16">
        <circle cx="7" cy="4.500" r="3.500" fill="#e9bb3e" stroke="#96701a" />
        <path d="M1 15c0-5 2-6.500 6-6.500s6 1.500 6 6.500z" fill="#3fae3f" stroke="#1d7a1d" />
    </svg>
);
const FuncIcon = () => (
    <svg width="15" height="15">
        <rect x="0.500" y="0.500" width="14" height="14" rx="2" fill="#f4d46a" stroke="#a3821f" />
        <text x="5" y="12" fontSize="11" fontStyle="italic" fontWeight="bold" fill="#8a6414" fontFamily="'Liberation Serif', serif">f</text>
    </svg>
);
const NavGlyphs: Record<string, ReactNode> = {
    hat: (
        <svg width="17" height="15">
            <path d="M2 6c0-3 3-5 7-5s7 2 7 5c-3 2-11 2-14 0z" fill="#6ea6d8" stroke="#2f6596" />
            <path d="M5 8l4 6 4-6z" fill="#eccb5e" stroke="#a37f14" />
        </svg>
    ),
    scroll: (
        <svg width="15" height="16">
            <path d="M3 1.500h10v10H5v3H1v-2h2z" fill="#f0df9c" stroke="#a68a35" />
            <path d="M5 4h6M5 7h6" stroke="#a68a35" />
            <path d="M10 10l3 3-2 2-3-3z" fill="#d8a83a" stroke="#8a6a18" />
        </svg>
    ),
};

function Navigator() {
    return (
        <div className="h-[398px] relative pt-[5px] pl-[3px] pr-[3px] border-b border-[#888]">
            <PanelHead title="Навигатор" />
            <div className="relative h-[357px] bg-white border border-[#bbb] mt-px text-[11px] text-[#111]">
                <svg width="70" height="110" className="absolute left-0 top-0" stroke="#888" strokeDasharray="1 1" fill="none">
                    <path d="M10.500 14v91M10.500 26.500h8M10.500 74.500h8M10.500 90.500h8M10.500 106.500h8M29.500 30v12M29.500 42.500h10M48.500 46v13M48.500 58.500h12" />
                </svg>
                <div className="h-[16px] flex items-center pl-[3px] relative mt-px"><ChartGlyph /><span className="ml-[3px]">MetaTrader 4</span></div>
                <div className="h-[16px] flex items-center pl-[6px] relative"><Box open /><span className="ml-[6px]"><PeopleIcon /></span><span className="ml-[2px]">Счета</span></div>
                <div className="h-[16px] flex items-center pl-[25px] relative"><Box open /><span className="ml-[8px]"><ServerIcon /></span><span className="ml-[4px]">MetaQuotes-Demo</span></div>
                <div className="h-[16px] flex items-center pl-[61px] relative"><UserIcon /><span className="ml-[3px] tracking-[-0.2px]">118563723: CScalp</span></div>
                <div className="h-[16px] flex items-center pl-[6px] relative"><Box /><span className="ml-[7px]"><FuncIcon /></span><span className="ml-[3px]">Индикаторы</span></div>
                <div className="h-[16px] flex items-center pl-[6px] relative"><Box /><span className="ml-[6px]">{NavGlyphs.hat}</span><span className="ml-[2px]">Советники</span></div>
                <div className="h-[16px] flex items-center pl-[6px] relative"><Box /><span className="ml-[7px]">{NavGlyphs.scroll}</span><span className="ml-[3px]">Скрипты</span></div>
            </div>
            <div className="h-[19px] flex bg-[#e4e4e4] border border-[#bbb] border-t-0 text-[11px]">
                <div className="ml-[2px] w-[55px] h-[18px] bg-white border-l border-r border-b border-black text-center text-[#111] leading-[17px]">Общие</div>
                <div className="ml-[12px] w-[65px] text-[#555] leading-[14px] border-r border-[#666] h-[14px] mt-[2px]">Избранное</div>
            </div>
        </div>
    );
}

function ChartTabs() {
    return (
        <div className="h-[24px] flex items-start bg-[#e4e4e4] border-t border-[#555] text-[11px] text-[#555] relative">
            <div className="ml-[3px] w-[80px] h-[19px] bg-white border-l border-r border-b border-black text-[#111] text-center leading-[18px]">EURUSD,H4</div>
            <div className="w-[80px] h-[14px] mt-[3px] pl-[10px] leading-[14px] border-r border-[#666]">USDCHF,H4</div>
            <div className="w-[80px] h-[14px] mt-[3px] pl-[12px] leading-[14px] border-r border-[#666]">GBPUSD,H4</div>
            <div className="w-[76px] h-[14px] mt-[3px] pl-[10px] leading-[14px] border-r border-[#666]">USDJPY,H4</div>
            <div className="ml-auto mr-[9px] mt-[6px] flex gap-[15px]">
                <svg width="4" height="7"><path d="M4 0v7L0 3.500z" fill="#aaa" /></svg>
                <svg width="4" height="7"><path d="M0 0v7l4-3.500z" fill="#aaa" /></svg>
            </div>
        </div>
    );
}

const terminalTabs = [
    { t: "Активы", w: "w-[60px]" },
    { t: "История Счета", w: "w-[96px]" },
    { t: "Новости", w: "w-[62px]" },
    { t: "Алерты", w: "w-[59px]" },
    { t: "Почта", w: "w-[63px]", badge: "19" },
    { t: "Маркет", w: "w-[58px]" },
    { t: "Сигналы", w: "w-[65px]" },
    { t: "Статьи", w: "w-[56px]" },
    { t: "Библиотека", w: "w-[80px]" },
    { t: "Эксперты", w: "w-[70px]" },
    { t: "Журнал", w: "w-[60px]" },
];

const headCols = [
    ["Ордер", "text-left"],
    ["Время", "text-right"],
    ["Тип", "text-right"],
    ["Объем", "text-right"],
    ["Символ", "text-right"],
    ["Цена", "text-right"],
    ["S / L", "text-right"],
    ["T / P", "text-right"],
    ["Цена", "text-right"],
    ["Комиссия", "text-right"],
    ["Своп", "text-right"],
    ["Прибыль", "text-right"],
];
const tableCols = "grid grid-cols-[117px_163px_80px_63px_82px_89px_90px_90px_90px_90px_90px_136px]";

function OrderIcon({ buy }: { buy: boolean }) {
    return (
        <svg width="14" height="16" className="shrink-0">
            <path d="M1.500 1.500h6l3 3v9h-9z" fill="#fff" stroke="#666" />
            <circle cx="10" cy="12" r="3" fill={buy ? "#2a84d2" : "#e2401e"} stroke={buy ? "#155a9a" : "#9a2a10"} strokeWidth=".7" />
        </svg>
    );
}

function Terminal() {
    return (
        <div className="h-[135px] bg-[#e4e4e4] border-t border-[#888] pt-[2px] flex flex-col">
            <div className="flex h-[107px]">
                <div className="w-[14px] ml-px flex flex-col">
                    <div className="h-[12px] flex items-center justify-center"><CloseX /></div>
                    <div className="flex-1 w-[11px] ml-px" />
                </div>
                <div className="w-[1181px] overflow-hidden bg-white">
                    <div className={`${tableCols} h-[18px] bg-[#e4e4e4] text-[11px] tracking-[-0.15px] text-[#333] leading-[17px]`}>
                        {headCols.map(([t, align], i) => (
                            <div key={i} className={`border border-t-white border-l-white border-r-[#777] border-b-[#777] px-[7px] ${align}`}>
                                {t}
                                {i === 0 && <span className="ml-[11px] text-[#bbb] text-[9px]">△</span>}
                            </div>
                        ))}
                    </div>
                    {orders.map((o, i) => (
                        <div key={o[0]} className={`${tableCols} h-[20px] border-b border-[#c8c8c8] text-[11px] leading-[19px] text-[#222] text-right ${i % 2 ? "bg-[#ebebeb]" : "bg-white"}`}>
                            <div className="flex items-center gap-[3px] pl-[5px] text-left border-r border-[#c8c8c8]"><OrderIcon buy={o[2] === "buy"} />{o[0]}</div>
                            <div className="pr-[4px] border-r border-[#c8c8c8]">{o[1]}</div>
                            <div className="pr-[4px] border-r border-[#c8c8c8]">{o[2]}</div>
                            <div className="pr-[4px] border-r border-[#c8c8c8]">1.00</div>
                            <div className="pr-[4px] border-r border-[#c8c8c8]">eurusd</div>
                            <div className="pr-[3px] border-r border-[#c8c8c8]">{o[3]}</div>
                            <div className="pr-[3px] border-r border-[#c8c8c8]">0.00000</div>
                            <div className="pr-[3px] border-r border-[#c8c8c8]">0.00000</div>
                            <div className="pr-[3px] border-r border-[#c8c8c8]">{o[4]}</div>
                            <div className="pr-[3px] border-r border-[#c8c8c8]">0.00</div>
                            <div className="pr-[3px] border-r border-[#c8c8c8]">0.00</div>
                            <div className="pr-[24px] relative">
                                {o[5]}
                                <svg width="9" height="9" className="absolute right-[6px] top-[5px]"><path d="M1 1l7 7M8 1l-7 7" stroke="#8a8a8a" strokeWidth="2.4" /></svg>
                            </div>
                        </div>
                    ))}
                </div>
                <div className={`w-[16px] flex flex-col ml-px ${hatch}`}>
                    <ScrollBtn up />
                    <div className="h-[41px] mt-px bg-[#e4e4e4] border border-t-white border-l-white border-r-[#555] border-b-[#555]" />
                    <div className="flex-1" />
                    <ScrollBtn />
                </div>
            </div>
            <div className="flex-1 flex border-t border-black text-[11px] text-[#555] relative">
                <div className="absolute left-[2px] bottom-[4px] w-[11px] h-[111px] bg-gradient-to-b from-[#a8a8a8] to-[#bdbdbd] text-[#e0e0e0] text-[11px] leading-[11px] flex items-start justify-center">
                    <span className="[writing-mode:vertical-rl] rotate-180 absolute bottom-[2px]">Терминал</span>
                </div>
                <div className="ml-[18px] w-[66px] h-[19px] bg-white border-l border-r border-b border-black text-[#111] text-center leading-[18px]">Торговля</div>
                {terminalTabs.map((tab, i) => (
                    <div key={tab.t} className={`h-[14px] mt-[3px] leading-[14px] border-r border-[#666] ${i === 0 ? "pl-[11px]" : "pl-[9px]"} ${tab.w}`}>
                        {tab.t}
                        {tab.badge && <span className="ml-[3px] text-[9px] text-[#ff0000] relative top-[2px]">{tab.badge}</span>}
                    </div>
                ))}
            </div>
        </div>
    );
}

const statusCells = [
    { t: "Default", w: "w-[109px]" },
    { t: "2022.09.21 20:00", w: "w-[101px]" },
    { t: "O: 0.98765", w: "w-[73px]" },
    { t: "H: 0.99106", w: "w-[70px]" },
    { t: "L: 0.98130", w: "w-[69px]" },
    { t: "C: 0.98384", w: "w-[72px]" },
    { t: "V: 21466", w: "w-[65px]" },
];

function StatusBar() {
    return (
        <div className="h-[23px] bg-[#e4e4e4] border-t border-white flex items-center text-[11px] text-[#222] relative">
            <div className="w-[518px] pl-[3px] tracking-[-0.25px]">Для вызова справки нажмите F1</div>
            {statusCells.map((c) => (
                <div key={c.t} className={`h-[17px] leading-[18px] pl-[4px] border-l border-[#888] ${c.w}`}>{c.t}</div>
            ))}
            <div className="h-[17px] flex items-center pl-[4px] border-l border-[#888]">
                <svg width="24" height="16">
                    {Array.from({ length: 8 }, (_, i) => (
                        <g key={i} shapeRendering="crispEdges">
                            <rect x={i * 3} y={1} width={2} height={15} fill="#6a8a18" />
                            <rect x={i * 3} y={12 - i * 1.2} width={2} height={4 + i * 1.2} fill="#a52019" />
                        </g>
                    ))}
                </svg>
                <span className="ml-[4px]">17252/7 kb</span>
            </div>
            <svg width="14" height="14" className="absolute right-0 bottom-0" stroke="#999">
                <path d="M14 1L1 14M14 5L5 14M14 9L9 14" />
            </svg>
        </div>
    );
}

export default function App() {
    return (
        <div className="w-[1216px] h-[1057px] overflow-hidden bg-[#e4e4e4] [font-family:Roboto,sans-serif] flex flex-col">
            {/* mac window title */}
            <div className="h-[24px] shrink-0 flex items-center relative rounded-t-[5px] bg-gradient-to-b from-[#5c5c5c] to-[#3a3a3a] border-t border-[#777]">
                <div className="flex ml-[8px] gap-[8px]">
                    <div className="w-[12px] h-[12px] rounded-full bg-[#fc5753]" />
                    <div className="w-[12px] h-[12px] rounded-full bg-[#fdbc40]" />
                    <div className="w-[12px] h-[12px] rounded-full bg-[#33c748]" />
                </div>
                <div className="absolute inset-x-0 mt-[1px] text-center text-[13.6px] text-[#b3b3b3] whitespace-nowrap [font-family:'Liberation_Sans',sans-serif]">
                    118563723: MetaQuotes-Demo - Демо Счет - MetaQuotes Software Corp. - EURUSD,H4
                </div>
            </div>
            {/* menu */}
            <div className="h-[20px] shrink-0 flex items-center text-[11px] text-[#111] relative">
                <span className="ml-[6px] w-[41px]"><u>Ф</u>айл</span>
                <span className="w-[35px]"><u>В</u>ид</span>
                <span className="w-[57px]">Вст<u>а</u>вка</span>
                <span className="w-[60px]"><u>Г</u>рафики</span>
                <span className="w-[52px]">С<u>е</u>рвис</span>
                <span className="w-[42px]"><u>О</u>кно</span>
                <span><u>С</u>правка</span>
            </div>
            <ToolbarTop />
            <ToolbarBottom />
            <div className="flex h-[801px] shrink-0">
                <div className="w-[189px] border-r border-[#888]">
                    <MarketWatch />
                    <Navigator />
                </div>
                <div className="flex-1 flex flex-col">
                    <div className="h-[777px] pl-[1px] pt-[4px] bg-[#9c9c9c] grid grid-cols-[508px_508px] gap-x-[4px] gap-y-[5px] content-start">
                        <ChartWindow title="EURUSD,H4" active>
                            <Chart
                                ox={194}
                                oy={122}
                                frameTop={126}
                                frameBottom={460}
                                gridY={[160, 193, 226, 259, 292, 325, 358, 391, 424, 457]}
                                labels={[["1.00230", 160], ["0.99675", 193], ["0.99120", 226], ["0.98565", 259], ["0.97470", 325], ["0.96915", 358], ["0.96360", 391], ["0.95820", 424], ["0.95265", 457]]}
                                price={["0.98076", 289, 289]}
                                dates={eurDates}
                                legend={["EURUSD,H4", "0.97806 0.98092 0.97763 0.98076", 76]}
                            >
                                <line x1={388} x2={649} y1={183.5} y2={183.5} stroke="#32cd32" strokeDasharray="8 7 3 6" shapeRendering="crispEdges" />
                                <EurCandles />
                                <polyline points={line(eurMa)} fill="none" stroke="#ff0000" strokeWidth={1} shapeRendering="crispEdges" />
                                <line x1={197} x2={649} y1={295} y2={295} stroke="#32cd32" strokeWidth={3} strokeDasharray="8 7 3 6" shapeRendering="crispEdges" />
                                <rect x={197} y={165} width={1} height={15} fill="#00ff00" />
                                {["#944570393 buy 1.00", "#944570401 buy 1.00", "#944570469 sell 1.00", "#944570473 sell 1.00"].map((t) => (
                                    <text key={t} x={205} y={293} fill="#fff" fontSize={11}>{t}</text>
                                ))}
                            </Chart>
                            <TradePanel sell={["0.98", "07", "6"]} buy={["0.98", "08", "5"]} />
                        </ChartWindow>
                        <ChartWindow title="GBPUSD,H4">
                            <Chart
                                ox={706}
                                oy={122}
                                frameTop={126}
                                frameBottom={460}
                                gridY={[160, 193, 226, 259, 292, 325, 358, 391, 424, 457]}
                                labels={[["1.16620", 160], ["1.15140", 193], ["1.13660", 226], ["1.12180", 259], ["1.10700", 292], ["1.09220", 325], ["1.07740", 358], ["1.06260", 391], ["1.04780", 424], ["1.03300", 457]]}
                                price={["1.11040", 284, 284]}
                                dates={gbpDates}
                                legend={["GBPUSD,H4", "1.10513 1.11055 1.10437 1.11040", 76]}
                            >
                                <Bars data={gbpBars} cx={700} cy={100} />
                                <polyline points={line(gbpMa.map(([x, y]): Pt => [700 + x / 3, 100 + y / 3]))} fill="none" stroke="#ff0000" shapeRendering="crispEdges" />
                            </Chart>
                            <TradePanel red sell={["1.11", "04", "0"]} buy={["1.11", "05", "5"]} />
                        </ChartWindow>
                        <ChartWindow title="USDCHF,H4">
                            <Chart
                                ox={194}
                                oy={510}
                                frameTop={514}
                                frameBottom={735}
                                sub={{ grid: [], labels: [["0.007158", 746], ["0.00", 793], ["-0.007275", 841]] }}
                                gridY={[536, 569, 601, 634, 667, 700, 733]}
                                labels={[["0.99450", 536], ["0.98650", 569], ["0.97870", 601], ["0.97090", 634], ["0.96290", 667], ["0.95510", 700], ["0.94730", 733]]}
                                price={["0.97539", 615, 615]}
                                dates={sepDates}
                                legend={["USDCHF,H4", "0.97913 0.97989 0.97533 0.97539", 76]}
                            >
                                <Bars data={chfBars} cx={190} cy={490} />
                                <MacdPane />
                            </Chart>
                            <TradePanel sell={["0.97", "53", "9"]} buy={["0.97", "56", "1"]} />
                        </ChartWindow>
                        <ChartWindow title="USDJPY,H4">
                            <Chart
                                ox={706}
                                oy={510}
                                frameTop={514}
                                frameBottom={735}
                                sub={{ grid: [759, 778, 798], labels: [["196.957", 746, 458], ["100", 759, 455], ["0.00", 778, 455], ["-100", 798, 455], ["-353.0155", 841, 456]] }}
                                gridY={[536, 569, 601, 634, 667, 700, 733]}
                                labels={[["145.650", 536], ["144.750", 569], ["143.850", 601], ["142.950", 634], ["142.050", 667], ["141.175", 700], ["140.275", 733]]}
                                price={["144.446", 579, 579]}
                                dates={eurDates}
                                legend={["USDJPY,H4", "144.614 144.618 144.320 144.446", 73]}
                            >
                                <JpyCandles />
                                <polyline points={line(cciLine.map(([x, y]): Pt => [700 + x / 3, 490 + y / 3]))} fill="none" stroke="#20b2aa" shapeRendering="crispEdges" />
                                <ChartText x={713} y={751} spacing={-0.25}>CCI(14) -27.6256</ChartText>
                            </Chart>
                            <TradePanel red sell={["144", "44", "6"]} buy={["144", "46", "1"]} />
                        </ChartWindow>
                    </div>
                    <ChartTabs />
                </div>
            </div>
            <Terminal />
            <StatusBar />
        </div>
    );
}
